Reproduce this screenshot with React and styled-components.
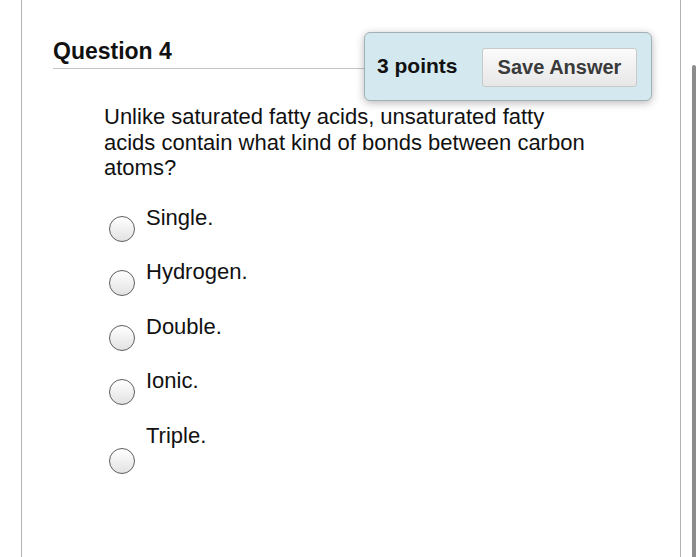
import React, { useState } from 'react';
import styled, { createGlobalStyle } from 'styled-components';

const GlobalStyle = createGlobalStyle`
	body {
		margin: 0;
		background: #fff;
		font-family: 'Liberation Sans', Arial, Helvetica, sans-serif;
		color: #111;
	}
`;

const Page = styled.div`
	display: flex;
	width: 700px;
	height: 557px;
	overflow: hidden;
	background: #fff;
`;

const Panel = styled.div`
	margin-left: 21px;
	width: 658px;
	height: 557px;
	border-left: 1px solid #b4b4b4;
	border-right: 1px solid #b4b4b4;
	position: relative;
`;

const ScrollThumb = styled.div`
	margin: 65px 0 0 11px;
	width: 4px;
	height: 520px;
	background: #8c8c8c;
	border-radius: 2px 2px 0 0;
`;

const Header = styled.div`
	margin: 0 28px 0 31px;
	padding: 38px 0 4px;
	border-bottom: 1px solid #c4c4c4;
`;

const Title = styled.h2`
	margin: 0;
	font-size: 23px;
	line-height: 26px;
	font-weight: bold;
	color: #111;
`;

const PointsBox = styled.div`
	position: absolute;
	top: 32px;
	left: 342px;
	width: 288px;
	height: 69px;
	box-sizing: border-box;
	display: flex;
	align-items: center;
	justify-content: space-between;
	padding: 2px 14px 0 12px;
	background: #d4e9ef;
	border: 1px solid #a3b0b4;
	border-radius: 6px;
	box-shadow: 0 2px 9px rgba(0, 0, 0, 0.28);
`;

const Points = styled.span`
	font-size: 21px;
	font-weight: bold;
	color: #111;
	margin-top: -4px;
`;

const SaveButton = styled.button`
	width: 155px;
	height: 39px;
	font-family: inherit;
	font-size: 20px;
	font-weight: bold;
	color: #3a3a3a;
	background: linear-gradient(#fbfbfb, #e7e7e7);
	border: 1px solid #c9c9c9;
	border-radius: 3px;
	padding: 0;
	cursor: pointer;
`;

const Body = styled.div`
	padding: 35px 0 0 82px;
	width: 494px;
`;

const Prompt = styled.p`
	margin: 0;
	font-size: 22px;
	line-height: 25.5px;
	color: #111;
`;

const Options = styled.div`
	display: flex;
	flex-direction: column;
	gap: 17.5px;
	margin-top: 24px;
`;

const Option = styled.label`
	display: flex;
	align-items: flex-start;
	gap: 11px;
	cursor: pointer;
`;

const Radio = styled.span`
	flex: none;
	width: 26px;
	height: 26px;
	box-sizing: border-box;
	margin: ${({ $drop }) => $drop}px 0 0 5px;
	border: 1.5px solid #5e5e5e;
	border-radius: 50%;
	background: ${({ $checked }) =>
		$checked
			? 'radial-gradient(circle, #333 0 5px, #f4f4f4 6px)'
			: 'linear-gradient(#ffffff, #e2e2e2)'};
`;

const Label = styled.span`
	font-size: 22px;
	line-height: 26px;
	color: #111;
`;

const choices = [
	{ text: 'Single.', drop: 11 },
	{ text: 'Hydrogen.', drop: 11 },
	{ text: 'Double.', drop: 11 },
	{ text: 'Ionic.', drop: 11 },
	{ text: 'Triple.', drop: 25 },
];

const App = () => {
	const [picked, setPicked] = useState(null);

	return (
		<Page>
			<GlobalStyle />
			<Panel>
				<Header>
					<Title>Question 4</Title>
				</Header>
				<PointsBox>
					<Points>3 points</Points>
					<SaveButton>Save Answer</SaveButton>
				</PointsBox>
				<Body>
					<Prompt>
						Unlike saturated fatty acids, unsaturated fatty acids contain what kind
						of bonds between carbon atoms?
					</Prompt>
					<Options>
						{choices.map((c, i) => (
							<Option key={c.text} onClick={() => setPicked(i)}>
								<Radio $drop={c.drop} $checked={picked === i} />
								<Label>{c.text}</Label>
							</Option>
						))}
					</Options>
				</Body>
			</Panel>
			<ScrollThumb />
		</Page>
	);
};

export default App;
